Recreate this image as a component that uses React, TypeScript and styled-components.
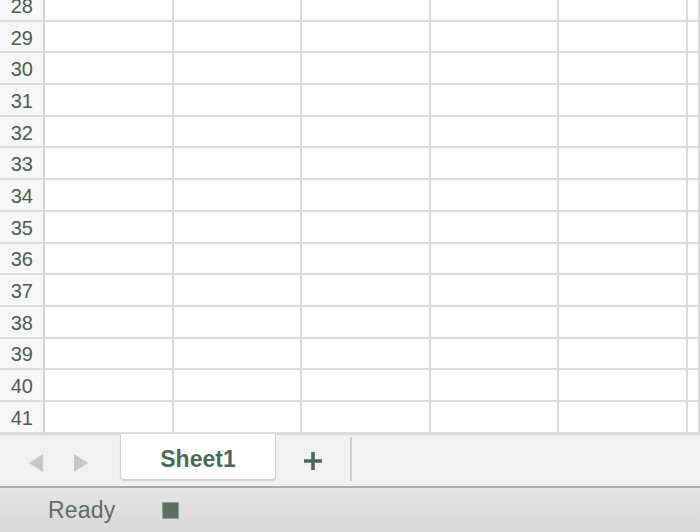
import React from 'react';
import styled, { createGlobalStyle } from 'styled-components';

const GlobalStyle = createGlobalStyle`
  html, body {
    margin: 0;
    padding: 0;
    height: 532px;
    overflow: hidden;
    background: #ffffff;
  }
  * {
    box-sizing: border-box;
  }
`;

const Page = styled.div`
  display: flex;
  flex-direction: column;
  width: 700px;
  height: 532px;
  font-family: 'Liberation Sans', Arial, sans-serif;
`;

const GridViewport = styled.div`
  height: 434px;
  overflow: hidden;
  background: #ffffff;
`;

const GridBody = styled.div`
  margin-top: -10px;
`;

const Row = styled.div`
  display: grid;
  grid-template-columns: 45px repeat(5, 128.5px) 1fr;
  height: 31.7px;
`;

const RowHeader = styled.div`
  display: flex;
  align-items: center;
  justify-content: flex-end;
  padding: 2px 10px 0 0;
  background: #f7f7f7;
  border-right: 2px solid #d2d2d2;
  border-bottom: 2px solid #dcdcdc;
  color: #4a5c52;
  font-size: 20px;
  line-height: 1;
`;

const Cell = styled.div`
  border-right: 2px solid #dadada;
  border-bottom: 2px solid #dcdcdc;
`;

const TabBar = styled.div`
  display: flex;
  align-items: stretch;
  height: 52px;
  background: #f1f1f1;
  border-top: 1px solid #d6d6d6;
`;

const NavGroup = styled.div`
  display: flex;
  align-items: center;
  gap: 31px;
  width: 120px;
  padding: 4px 0 0 29px;
`;

const NavArrow = styled.div<{ $dir: 'left' | 'right' }>`
  width: 0;
  height: 0;
  border-top: 9px solid transparent;
  border-bottom: 9px solid transparent;
  ${(p) =>
    p.$dir === 'left'
      ? 'border-right: 14px solid #c6c6c6;'
      : 'border-left: 14px solid #c6c6c6;'}
`;

const SheetTab = styled.div`
  display: flex;
  align-items: center;
  justify-content: center;
  width: 156px;
  height: 46px;
  margin-top: -1px;
  padding-top: 5px;
  background: #ffffff;
  border: 1px solid #d0d0d0;
  border-top: none;
  border-radius: 0 0 4px 4px;
  box-shadow: 0 1px 1px rgba(0, 0, 0, 0.12);
  color: #4a6b58;
  font-size: 23px;
  font-weight: bold;
`;

const AddButton = styled.div`
  display: flex;
  align-items: center;
  justify-content: center;
  width: 76px;
  height: 44px;
  margin-top: 2px;
  padding-top: 4px;
  border-right: 2px solid #cfcfcf;
`;

const StatusBar = styled.div`
  display: flex;
  align-items: center;
  gap: 47px;
  height: 46px;
  padding-left: 48px;
  background: linear-gradient(#e4e4e4, #d9d9d9);
  border-top: 2px solid #a9a9a9;
`;

const StatusText = styled.span`
  color: #5d6d64;
  font-size: 23px;
  letter-spacing: 0.2px;
`;

const MacroSquare = styled.div`
  width: 17px;
  height: 17px;
  background: #587262;
  border: 1px solid #8fa096;
`;

const rows = Array.from({ length: 15 }, (_, i) => 28 + i);

const App: React.FC = () => (
  <Page>
    <GlobalStyle />
    <GridViewport>
      <GridBody>
        {rows.map((n) => (
          <Row key={n}>
            <RowHeader>{n}</RowHeader>
            {Array.from({ length: 6 }, (_, c) => (
              <Cell key={c} />
            ))}
          </Row>
        ))}
      </GridBody>
    </GridViewport>
    <TabBar>
      <NavGroup>
        <NavArrow $dir="left" />
        <NavArrow $dir="right" />
      </NavGroup>
      <SheetTab>Sheet1</SheetTab>
      <AddButton>
        <svg width="20" height="20" viewBox="0 0 20 20">
          <path d="M10 1v18M1 10h18" stroke="#4a6b58" strokeWidth="3.6" />
        </svg>
      </AddButton>
    </TabBar>
    <StatusBar>
      <StatusText>Ready</StatusText>
      <MacroSquare />
    </StatusBar>
  </Page>
);

export default App;
